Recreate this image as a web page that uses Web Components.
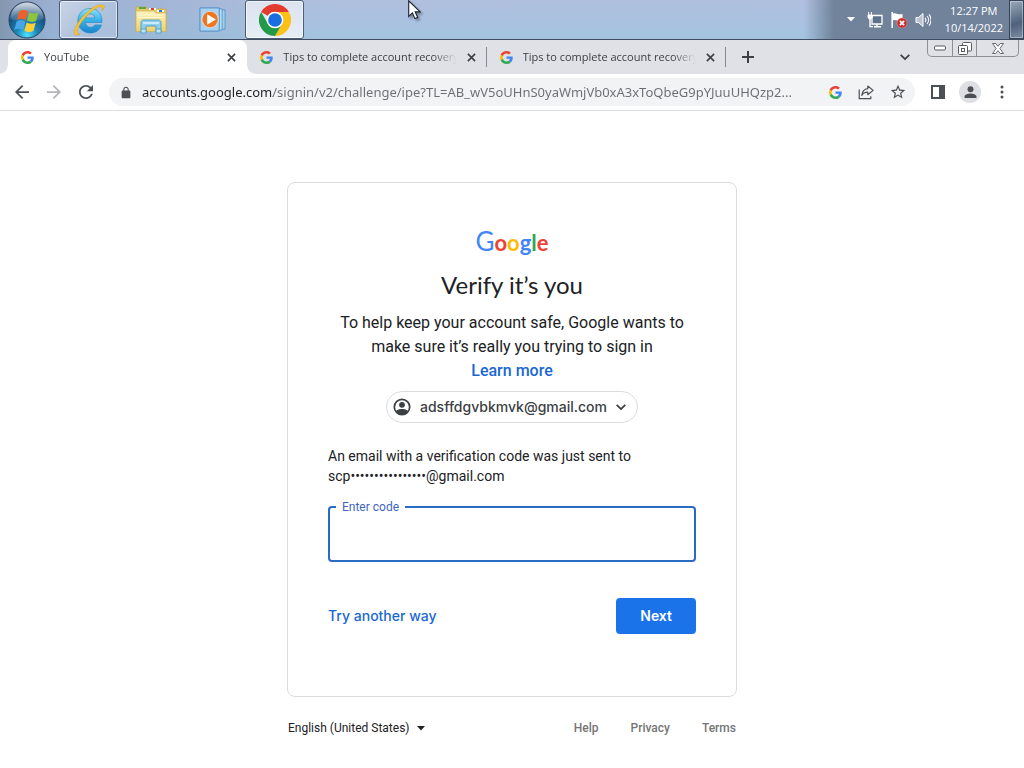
<!DOCTYPE html>
<html lang="en">
<head>
<meta charset="utf-8">
<title>YouTube</title>
<style>
  html, body { height: 100%; }
  body {
    margin: 0;
    background: #fff;
    font-family: Roboto, "Liberation Sans", sans-serif;
    color: #202124;
  }
</style>
</head>
<body>
<desktop-screen>
  <task-bar slot="taskbar">
    <task-button label="Internet Explorer" icon="ie" state="open"></task-button>
    <task-button label="Windows Explorer" icon="folder"></task-button>
    <task-button label="Windows Media Player" icon="player" size="27"></task-button>
    <task-button label="Google Chrome" icon="chrome" state="active"></task-button>
    <system-tray slot="tray"></system-tray>
  </task-bar>
  <tab-strip slot="tabs">
    <browser-tab active>YouTube</browser-tab>
    <browser-tab>Tips to complete account recovery</browser-tab>
    <browser-tab>Tips to complete account recovery</browser-tab>
  </tab-strip>
  <address-bar slot="toolbar"></address-bar>
  <sign-in-page>
    <sign-in-card>
      <account-chip slot="account">adsffdgvbkmvk@gmail.com</account-chip>
      <code-field slot="field" label="Enter code"></code-field>
    </sign-in-card>
    <page-footer></page-footer>
  </sign-in-page>
</desktop-screen>

<script>
const ICONS = {
  google: ['0 0 48 48', `
    <path fill="#ea4335" d="M24 9.5c3.54 0 6.71 1.22 9.21 3.6l6.85-6.85C35.9 2.38 30.47 0 24 0 14.62 0 6.51 5.38 2.56 13.22l7.98 6.19C12.43 13.72 17.74 9.5 24 9.5z"/>
    <path fill="#4285f4" d="M46.98 24.55c0-1.57-.15-3.09-.38-4.55H24v9.02h12.94c-.58 2.96-2.26 5.48-4.78 7.18l7.73 6c4.51-4.18 7.09-10.36 7.09-17.65z"/>
    <path fill="#fbbc05" d="M10.53 28.59c-.48-1.45-.76-2.99-.76-4.59s.27-3.14.76-4.59l-7.98-6.19C.92 16.46 0 20.12 0 24c0 3.88.92 7.54 2.56 10.78l7.97-6.19z"/>
    <path fill="#34a853" d="M24 48c6.48 0 11.93-2.13 15.89-5.81l-7.73-6c-2.15 1.45-4.92 2.3-8.16 2.3-6.26 0-11.57-4.22-13.47-9.91l-7.98 6.19C6.51 42.62 14.62 48 24 48z"/>`],
  close: ['0 0 10 10', `<path d="M1 1l8 8M9 1L1 9" stroke="currentColor" stroke-width="1.8" fill="none"/>`],
  plus: ['0 0 12 12', `<path d="M6 0v12M0 6h12" stroke="currentColor" stroke-width="2" fill="none"/>`],
  chevron: ['0 0 10 10', `<path d="M.7 2.8L5 7.1l4.3-4.3" stroke="currentColor" stroke-width="1.8" fill="none"/>`],
  back: ['4 4 16 16', `<path fill="currentColor" d="M20 11H7.83l5.59-5.59L12 4l-8 8 8 8 1.41-1.41L7.83 13H20v-2z"/>`],
  forward: ['4 4 16 16', `<path fill="currentColor" d="M12 4l-1.41 1.41L16.17 11H4v2h12.17l-5.58 5.59L12 20l8-8z"/>`],
  reload: ['4 4 16 16', `<path fill="currentColor" d="M17.65 6.35C16.2 4.9 14.21 4 12 4c-4.42 0-7.99 3.58-7.99 8s3.57 8 7.99 8c3.73 0 6.84-2.55 7.73-6h-2.08c-.82 2.33-3.04 4-5.65 4-3.31 0-6-2.69-6-6s2.69-6 6-6c1.66 0 3.14.69 4.22 1.78L13 11h7V4l-2.35 2.35z"/>`],
  lock: ['1 0 22 23', `<path fill="currentColor" d="M18 8h-1V6c0-2.76-2.24-5-5-5S7 3.24 7 6v2H6c-1.1 0-2 .9-2 2v10c0 1.1.9 2 2 2h12c1.1 0 2-.9 2-2V10c0-1.1-.9-2-2-2zM9 6a3 3 0 016 0v2H9z"/>`],
  share: ['0 0 16 16', `<path fill="none" stroke="currentColor" stroke-width="1.2" stroke-linejoin="round" d="M1.2 5.5v9.2h11.6v-2.4M9.8 2l5.3 4.4-5.3 4.3V8.2C6.7 8.2 4.9 9.3 3.8 11.4 4.2 7.7 6.2 5 9.8 4.6z"/>`],
  star: ['1 1 22 22', `<path fill="currentColor" d="M22 9.24l-7.19-.62L12 2 9.19 8.63 2 9.24l5.46 4.73L5.82 21 12 17.27 18.18 21l-1.63-7.03L22 9.24zM12 15.4l-3.76 2.27 1-4.28-3.32-2.88 4.38-.38L12 6.1l1.71 4.04 4.38.38-3.32 2.88 1 4.28L12 15.4z"/>`],
  panel: ['0 0 14 14', `<path fill="currentColor" fill-rule="evenodd" d="M0 0h14v14H0zM2 2v10h6V2z"/>`],
  person: ['0 0 14 14', `<circle cx="7" cy="3.6" r="3.2" fill="currentColor"/><path fill="currentColor" d="M.6 13v-1.6C.6 9.2 4.5 8.2 7 8.2s6.4 1 6.4 3.2V13z"/>`],
  dots: ['0 0 4 14', `<g fill="currentColor"><circle cx="2" cy="2" r="1.5"/><circle cx="2" cy="7" r="1.5"/><circle cx="2" cy="12" r="1.5"/></g>`],
  account: ['0 0 18 18', `
    <circle cx="9" cy="9" r="7.7" fill="none" stroke="currentColor" stroke-width="1.7"/>
    <circle cx="9" cy="6.8" r="2.9" fill="currentColor"/>
    <path fill="currentColor" d="M2.6 13.2C4.2 11.5 6.5 10.9 9 10.9s4.8.6 6.4 2.3C14 15.7 11.7 17 9 17s-5-1.3-6.4-3.8z"/>`],
  caret: ['0 0 8 5', `<path d="M0 0h8L4 4.5z" fill="currentColor"/>`],
  network: ['0 0 16 16', `
    <path d="M5 3.5h10v8.5H5z" fill="#5d718c" stroke="#fff" stroke-width="1.3"/>
    <path d="M7 14.7h7M10 12v2.5M3 6v8.6h3" stroke="#fff" stroke-width="1.4" fill="none"/>
    <path d="M1 3h4.200v2.500L4 7H2.200L1 5.500zM1.700 0v3M4.400 0v3" fill="#fff" stroke="#fff" stroke-width="1"/>`],
  flag: ['0 0 16 16', `
    <path d="M1.2 0v16" stroke="#fff" stroke-width="1.6"/>
    <path d="M2 1.5c3-1.3 4.5 1.6 9.5.4v6.6c-4.5 1.2-6.5-1.3-9.5-.2z" fill="#fff"/>
    <circle cx="11" cy="11" r="5" fill="#cf2b2b" stroke="#e9a09c" stroke-width=".5"/>
    <path d="M8.9 8.9l4.2 4.2m0-4.2l-4.2 4.2" stroke="#fff" stroke-width="1.7"/>`],
  speaker: ['0 0 16 16', `
    <path d="M1 5.5h2.500L8 1.500v13l-4.500-4H1z" fill="#b9c3cf" stroke="#fff" stroke-width="1"/>
    <path d="M10 5.8a3.4 3.4 0 010 4.4M12 4a6 6 0 010 8M14 2.3a9 9 0 010 11.4" stroke="#fff" stroke-width="1.1" fill="none"/>`],
  minimize: ['0 0 12 6', `<rect x=".6" y="1" width="10.8" height="4" rx="1" fill="#fff" stroke="#555b63"/>`],
  restore: ['0 0 14 13', `<g fill="#fff" stroke="#555b63"><rect x="4.5" y=".5" width="9" height="8.5" rx="1"/><rect x=".5" y="3.5" width="9" height="9" rx="1"/><rect x="3.5" y="6.5" width="3" height="3"/></g>`],
  quit: ['0 0 12 11', `<path d="M.5.5h3.3L6 3.3 8.2.5h3.3L7.9 5.5l3.6 5H8.2L6 7.7l-2.2 2.8H.5l3.6-5z" fill="#fff" stroke="#555b63" stroke-width=".9"/>`],
  cursor: ['0 0 13 20', `<path d="M.7.8v15.600l3.700-3.500 2.500 5.700 2.700-1.200-2.400-5.500h5z" fill="#fff" stroke="#18202c" stroke-width="1.1"/>`],
  orb: ['0 0 38 38', `
    <defs>
      <radialGradient id="base" cx=".5" cy=".92" r=".85"><stop offset="0" stop-color="#4fe0fb"/><stop offset=".35" stop-color="#1b86b9"/><stop offset=".75" stop-color="#174f7d"/><stop offset="1" stop-color="#5a7a98"/></radialGradient>
      <linearGradient id="gloss" x2="0" y2="1"><stop stop-color="#fff" stop-opacity=".7"/><stop offset="1" stop-color="#fff" stop-opacity=".08"/></linearGradient>
    </defs>
    <circle cx="19" cy="19" r="18" fill="url(#base)" stroke="#29445f"/>
    <path d="M2.5 18a16.5 16.5 0 0133 0c-9 3.5-24 3.5-33 0z" fill="url(#gloss)"/>
    <g transform="translate(-1.5 -1.5) scale(1.12)">
      <path d="M11.500 10.500c3-1.600 5.500-1.200 7.600.2l-2 7.600c-2.600-1.500-4.800-1.600-7.700-.1z" fill="#f0602a"/>
      <path d="M20.300 11.400c2.800 1.500 5.200 1.500 8.200.2l-2.100 7.600c-2.900 1.300-5.500 1-8.100-.4z" fill="#8cc63f"/>
      <path d="M9 19.600c3-1.400 5.300-1.300 7.800.2l-2 7.500c-2.500-1.400-4.900-1.500-7.800-.1z" fill="#48a7e8"/>
      <path d="M18 20.500c2.700 1.500 5.200 1.500 8.100.2L24 28.200c-2.800 1.300-5.300 1.200-8-.3z" fill="#ffd036"/>
    </g>`],
  ie: ['0 0 32 32', `
    <defs><linearGradient id="blue" x2="0" y2="1"><stop stop-color="#8fe0fb"/><stop offset=".5" stop-color="#35b0e8"/><stop offset="1" stop-color="#1b83cb"/></linearGradient></defs>
    <path fill="url(#blue)" stroke="#2287c4" stroke-width=".6" fill-rule="evenodd" d="M17 4.500c7.200 0 12 5.200 12 12v2H12.500c.5 3.200 2.400 4.700 5 4.700 2 0 3.400-.8 4.300-2.300h6.700C27 26 22.700 29 17.300 29 10 29 4.800 24 4.800 16.800S10 4.500 17 4.500zM12.700 14h9.200c-.4-2.700-2.100-4.100-4.600-4.100S13.200 11.300 12.700 14z"/>
    <path fill="#f7c631" stroke="#d99a1b" stroke-width=".5" d="M30.600 1.400c-2.400-1.700-8.300 0-14.200 4.800C8.400 12.700.2 24 1.500 29.600c.6 2.200 3.200 1.700 5.600.3-2 .2-2.900-.4-2.900-2 0-4.800 6.700-14.400 13.600-20C22.500 4.100 27 2 28.800 3.200c1 .7.8 2.200.2 3.800 1.800-2.400 2.800-4.700 1.600-5.600z"/>`],
  folder: ['0 0 32 32', `
    <defs><linearGradient id="manila" x2="0" y2="1"><stop stop-color="#fff3ba"/><stop offset="1" stop-color="#ecd06a"/></linearGradient></defs>
    <path d="M1 3h11l1 2h18v22H1z" fill="#e7cb69" stroke="#c4a44b" stroke-width=".7"/>
    <path d="M4 3h7v2H4z" fill="#5aa846"/><path d="M14 4h7v2h-7z" fill="#fff"/><path d="M16 4h3v2h-3z" fill="#d84331"/><path d="M22 6h7v2h-7z" fill="#fff"/><path d="M24 6h3v2h-3z" fill="#3579c4"/>
    <path d="M1 7h18l2 2h10v18.500H1z" fill="url(#manila)" stroke="#cfb25a" stroke-width=".7"/>
    <path d="M3 11h25M3 13.500h25" stroke="#fff8d5" stroke-width="1"/>
    <path d="M6 28v-9.500C6 17 7 16 8.500 16h15c1.500 0 2.500 1 2.500 2.500V28h-5v-6H11v6z" fill="#8fd0ef" stroke="#4c9ac6" stroke-width=".9"/>
    <path d="M8 19h16" stroke="#dff5fe" stroke-width="1.5"/>
    <path d="M6 25h5v4H6zM21 25h5v4h-5z" fill="#b8e5f7" stroke="#4c9ac6" stroke-width=".8"/>`],
  player: ['0 0 28 28', `
    <path d="M9 4h18v20H9z" fill="#a3cff0" stroke="#4a8ec2" stroke-width=".8"/>
    <path d="M5 3h19v22H5z" fill="#b8dbf5" stroke="#4a8ec2" stroke-width=".8"/>
    <path d="M1 2h20v24H1z" fill="#a9d3f2" stroke="#4287be" stroke-width=".9"/>
    <circle cx="11.5" cy="14" r="8.6" fill="#ef7620" stroke="#d8d6d8" stroke-width="1.2"/>
    <path d="M8.5 8.500v11l9-5.500z" fill="#fff"/>`],
  chrome: ['0 0 48 48', `
    <path fill="#e33b2e" d="M3.2 12A24 24 0 0144.8 12H24a12 12 0 00-10.4 6z"/>
    <path fill="#fbc116" d="M44.8 12A24 24 0 0124 48l10.4-18A12 12 0 0024 12z"/>
    <path fill="#229a48" d="M24 48A24 24 0 013.2 12l10.4 18A12 12 0 0034.4 30z"/>
    <circle cx="24" cy="24" r="12.5" fill="#fff"/><circle cx="24" cy="24" r="10.3" fill="#1a6fe0"/>`]
};

// name = key in ICONS, w / h = drawn size in pixels
class UiIcon extends HTMLElement {
  constructor() {
    super();
    this.attachShadow({ mode: 'open' });
  }

  connectedCallback() {
    const [viewBox, shapes] = ICONS[this.getAttribute('name')];
    const w = this.getAttribute('w') || 16;
    const h = this.getAttribute('h') || w;
    this.shadowRoot.innerHTML = `
      <style>
        :host { display: block; flex: none; line-height: 0; }
        svg { display: block; }
      </style>
      <svg width="${w}" height="${h}" viewBox="${viewBox}" aria-hidden="true">${shapes}</svg>
    `;
  }
}

class DesktopScreen extends HTMLElement {
  constructor() {
    super();
    this.attachShadow({ mode: 'open' }).innerHTML = `
      <style>
        :host {
          display: flex;
          flex-direction: column;
          min-height: 100vh;
        }
        header {
          font-family: "Open Sans", "Noto Sans", sans-serif;
        }
        main { flex: 1; }
        .cursor {
          position: absolute;
          left: 408px;
          top: 0;
          filter: drop-shadow(2px 2px 1px rgba(0,0,0,0.35));
        }
      </style>
      <header>
        <slot name="taskbar"></slot>
        <slot name="tabs"></slot>
        <slot name="toolbar"></slot>
      </header>
      <main><slot></slot></main>
      <ui-icon class="cursor" name="cursor" w="13" h="20"></ui-icon>
    `;
  }
}

class TaskBar extends HTMLElement {
  constructor() {
    super();
    this.attachShadow({ mode: 'open' }).innerHTML = `
      <style>
        :host {
          display: flex;
          height: 39px;
          border-bottom: 1px solid #3d4c61;
          background:
            linear-gradient(to right, rgba(105,122,145,0.6), rgba(120,145,185,0.35) 50px, rgba(160,180,210,0) 330px),
            linear-gradient(to right, rgba(112,131,155,0) calc(100% - 220px), #70839b calc(100% - 190px)),
            linear-gradient(#b0bfde, #a4c4e0);
        }
        .start {
          width: 55px;
          padding: 0 0 0 8px;
          margin-right: 4px;
          border: 0;
          background: none;
        }
        nav { display: flex; gap: 3px; flex: 1; }
      </style>
      <button class="start" aria-label="Start"><ui-icon name="orb" w="38"></ui-icon></button>
      <nav><slot></slot></nav>
      <slot name="tray"></slot>
    `;
  }
}

class TaskButton extends HTMLElement {
  constructor() {
    super();
    this.attachShadow({ mode: 'open' });
  }

  connectedCallback() {
    this.shadowRoot.innerHTML = `
      <style>
        :host { display: block; }
        button {
          box-sizing: border-box;
          width: 59px;
          height: 39px;
          padding: 0;
          display: grid;
          place-items: center;
          border: 1px solid transparent;
          border-radius: 3px;
          background: none;
        }
        :host([state]) button {
          border-color: #4b5d76;
          box-shadow: inset 0 0 0 1px rgba(255,255,255,0.6);
          background: linear-gradient(135deg, #c9d5e6, #b1c3dc 50%, #a8bedb);
        }
        :host([state="active"]) button {
          background: linear-gradient(#dce3ef, #e6edf5);
        }
      </style>
      <button aria-label="${this.getAttribute('label')}">
        <ui-icon name="${this.getAttribute('icon')}" w="${this.getAttribute('size') || 32}"></ui-icon>
      </button>
    `;
  }
}

class SystemTray extends HTMLElement {
  constructor() {
    super();
    this.attachShadow({ mode: 'open' }).innerHTML = `
      <style>
        :host { display: flex; align-items: center; color: #fff; }
        button { padding: 0; border: 0; background: none; color: inherit; }
        .icons { display: flex; align-items: center; gap: 8px; }
        .icons button:first-child { margin-right: 4px; }
        time {
          margin: 0 6px 0 14px;
          padding-bottom: 2px;
          text-align: center;
          font-size: 11px;
          line-height: 17px;
        }
        .peek {
          box-sizing: border-box;
          align-self: stretch;
          width: 15px;
          border: 1px solid #33445b;
          box-shadow: inset 0 0 0 1px rgba(255,255,255,0.35);
          background: linear-gradient(160deg, #9aa9bb, #4f627a 60%, #7d8fa5);
        }
      </style>
      <div class="icons">
        <button aria-label="Show hidden icons"><ui-icon name="caret" w="8" h="5"></ui-icon></button>
        <button aria-label="Network"><ui-icon name="network" w="16"></ui-icon></button>
        <button aria-label="Action Center"><ui-icon name="flag" w="16"></ui-icon></button>
        <button aria-label="Volume"><ui-icon name="speaker" w="16"></ui-icon></button>
      </div>
      <time datetime="2022-10-14T12:27">12:27 PM<br>10/14/2022</time>
      <button class="peek" aria-label="Show desktop"></button>
    `;
  }
}

class TabStrip extends HTMLElement {
  constructor() {
    super();
    this.attachShadow({ mode: 'open' }).innerHTML = `
      <style>
        :host {
          display: flex;
          align-items: center;
          height: 34px;
          padding: 0 5px 0 8px;
          background: #dfe1e6;
          color: #3c4043;
        }
        button { padding: 0; border: 0; background: none; color: inherit; }
        .tabs { display: flex; align-self: stretch; flex: 0 1 718px; min-width: 0; }
        .new { margin-left: 16px; }
        .search { margin: 0 17px 0 auto; }
        .window {
          display: flex;
          align-self: flex-start;
          border: 1px solid #8b9098;
          border-top: 0;
          border-radius: 0 0 5px 5px;
        }
        .window button {
          width: 24px;
          height: 16px;
          display: grid;
          place-items: center;
        }
        .window button + button { border-left: 1px solid #8b9098; }
        .window .quit { width: 42px; }
      </style>
      <div class="tabs" role="tablist"><slot></slot></div>
      <button class="new" aria-label="New tab"><ui-icon name="plus" w="12"></ui-icon></button>
      <button class="search" aria-label="Search tabs"><ui-icon name="chevron" w="10"></ui-icon></button>
      <div class="window">
        <button aria-label="Minimize"><ui-icon name="minimize" w="12" h="6"></ui-icon></button>
        <button aria-label="Restore"><ui-icon name="restore" w="14" h="13"></ui-icon></button>
        <button class="quit" aria-label="Close window"><ui-icon name="quit" w="12" h="11"></ui-icon></button>
      </div>
    `;
  }
}

class BrowserTab extends HTMLElement {
  constructor() {
    super();
    this.attachShadow({ mode: 'open' }).innerHTML = `
      <style>
        :host {
          box-sizing: border-box;
          display: flex;
          align-items: center;
          gap: 10px;
          flex: 1 1 0;
          min-width: 0;
          padding: 0 11px 0 13px;
          position: relative;
        }
        :host([active]) {
          border-radius: 8px 8px 0 0;
          background: #fff;
        }
        /* feet of the active tab */
        :host([active])::before, :host([active])::after {
          content: "";
          position: absolute;
          bottom: 0;
          width: 8px;
          height: 8px;
        }
        :host([active])::before {
          left: -8px;
          background: radial-gradient(circle at 0 0, transparent 7px, #fff 8px);
        }
        :host([active])::after {
          right: -8px;
          background: radial-gradient(circle at 100% 0, transparent 7px, #fff 8px);
        }
        :host(:not([active]))::after {
          content: "";
          position: absolute;
          right: 0;
          top: 7px;
          height: 20px;
          border-right: 1px solid #85898f;
        }
        .title {
          flex: 1;
          min-width: 0;
          overflow: hidden;
          white-space: nowrap;
          font-size: 11px;
          line-height: 16px;
          -webkit-mask: linear-gradient(to left, transparent, #000 24px);
          mask: linear-gradient(to left, transparent, #000 24px);
        }
        button { padding: 0; border: 0; background: none; color: inherit; }
      </style>
      <ui-icon name="google" w="13"></ui-icon>
      <span class="title" role="tab"><slot></slot></span>
      <button aria-label="Close tab"><ui-icon name="close" w="9"></ui-icon></button>
    `;
  }
}

class AddressBar extends HTMLElement {
  constructor() {
    super();
    this.attachShadow({ mode: 'open' }).innerHTML = `
      <style>
        :host {
          display: flex;
          align-items: center;
          height: 36px;
          padding: 0 15px;
          border-bottom: 1px solid #dcdee1;
          background: #fff;
          color: #4c4f54;
        }
        button { padding: 0; border: 0; background: none; color: inherit; }
        .nav { display: flex; gap: 18px; margin-right: 16px; }
        .nav button:disabled { color: #b4b6ba; }
        .box {
          display: flex;
          align-items: center;
          flex: 1;
          min-width: 0;
          height: 28px;
          padding: 0 9px 0 11px;
          border-radius: 14px;
          background: #f1f3f4;
        }
        input {
          flex: 1;
          min-width: 0;
          margin: 0 15px 0 10px;
          padding: 0;
          border: 0;
          outline: 0;
          font: 13px/20px "Noto Sans", "Open Sans", sans-serif;
          text-overflow: ellipsis;
          /* host part dark, path part grey */
          background: linear-gradient(to right, #202124 131px, #6a6e73 131px);
          -webkit-background-clip: text;
          background-clip: text;
          color: transparent;
        }
        .actions { display: flex; align-items: center; gap: 16px; }
        .tools { display: flex; align-items: center; gap: 14px; margin-left: 16px; }
        .avatar {
          width: 22px;
          height: 22px;
          display: grid;
          place-items: center;
          border-radius: 50%;
          background: #dddfe5;
        }
        .menu { width: 14px; display: grid; place-items: center; }
      </style>
      <div class="nav">
        <button aria-label="Back"><ui-icon name="back" w="14"></ui-icon></button>
        <button aria-label="Forward" disabled><ui-icon name="forward" w="14"></ui-icon></button>
        <button aria-label="Reload"><ui-icon name="reload" w="14"></ui-icon></button>
      </div>
      <div class="box">
        <ui-icon name="lock" w="12" h="13"></ui-icon>
        <input type="text" aria-label="Address and search bar" value="accounts.google.com/signin/v2/challenge/ipe?TL=AB_wV5oUHnS0yaWmjVb0xA3xToQbeG9pYJuuUHQzp2...">
        <div class="actions">
          <button aria-label="Google Lens"><ui-icon name="google" w="13"></ui-icon></button>
          <button aria-label="Share this page"><ui-icon name="share" w="16"></ui-icon></button>
          <button aria-label="Bookmark this tab"><ui-icon name="star" w="16"></ui-icon></button>
        </div>
      </div>
      <div class="tools">
        <button aria-label="Side panel"><ui-icon name="panel" w="14"></ui-icon></button>
        <button class="avatar" aria-label="Profile"><ui-icon name="person" w="13"></ui-icon></button>
        <button class="menu" aria-label="Menu"><ui-icon name="dots" w="4" h="14"></ui-icon></button>
      </div>
    `;
  }
}

class SignInPage extends HTMLElement {
  constructor() {
    super();
    this.attachShadow({ mode: 'open' }).innerHTML = `
      <style>
        :host {
          box-sizing: border-box;
          display: block;
          max-width: 450px;
          margin: 0 auto;
          padding-top: 71px;
        }
      </style>
      <slot></slot>
    `;
  }
}

class SignInCard extends HTMLElement {
  constructor() {
    super();
    this.attachShadow({ mode: 'open' }).innerHTML = `
      <style>
        :host {
          display: block;
          padding: 40px 40px 62px;
          border: 1px solid #dadce0;
          border-radius: 8px;
        }
        .intro { text-align: center; }
        .logo {
          height: 36px;
          font: 700 22px/36px Lato, sans-serif;
        }
        .cap { font-size: 26px; font-weight: 400; }
        .b { color: #4285f4; }
        .r { color: #ea4335; }
        .y { color: #fbbc05; }
        .g { color: #34a853; }
        h1 {
          margin: 10px 0;
          font: 400 24px/32px Lato, sans-serif;
        }
        p { margin: 0; }
        .lead { font-size: 16px; line-height: 24px; }
        a { color: #1a67d2; font-weight: 500; text-decoration: none; }
        .sent {
          margin: 23px 0 20px;
          font-size: 14px;
          line-height: 20px;
        }
        .actions {
          display: flex;
          justify-content: space-between;
          align-items: center;
          margin-top: 36px;
          font: 500 14px/20px Inter, sans-serif;
        }
        button {
          height: 36px;
          padding: 0 24px;
          border: 0;
          border-radius: 4px;
          font: inherit;
          font-weight: 600;
          color: #fff;
          background: #1a73e8;
        }
      </style>
      <div class="intro">
        <div class="logo"><span class="b cap">G</span><span class="r">o</span><span class="y">o</span><span class="b">g</span><span class="g">l</span><span class="r">e</span></div>
        <h1>Verify it’s you</h1>
        <p class="lead">To help keep your account safe, Google wants to make sure it’s really you trying to sign in<br><a href="#">Learn more</a></p>
        <slot name="account"></slot>
      </div>
      <p class="sent">An email with a verification code was just sent to scp••••••••••••••••@gmail.com</p>
      <slot name="field"></slot>
      <div class="actions">
        <a href="#">Try another way</a>
        <button type="button">Next</button>
      </div>
    `;
  }
}

class AccountChip extends HTMLElement {
  constructor() {
    super();
    this.attachShadow({ mode: 'open' }).innerHTML = `
      <style>
        :host { display: flex; justify-content: center; margin-top: 8px; }
        button {
          display: flex;
          align-items: center;
          gap: 9px;
          height: 32px;
          padding: 0 11px 0 6px;
          border: 1px solid #dadce0;
          border-radius: 16px;
          background: #fff;
          color: #3c4043;
          font: 500 14px/20px Inter, sans-serif;
        }
      </style>
      <button type="button">
        <ui-icon name="account" w="18"></ui-icon>
        <slot></slot>
        <ui-icon name="chevron" w="10"></ui-icon>
      </button>
    `;
  }
}

class CodeField extends HTMLElement {
  constructor() {
    super();
    this.attachShadow({ mode: 'open' });
  }

  connectedCallback() {
    this.shadowRoot.innerHTML = `
      <style>
        :host { display: block; position: relative; }
        input {
          box-sizing: border-box;
          display: block;
          width: 100%;
          height: 56px;
          padding: 13px 15px;
          border: 2px solid #2a6bc4;
          border-radius: 4px;
          outline: 0;
          font: 16px/24px Roboto, sans-serif;
        }
        label {
          position: absolute;
          left: 8px;
          top: -7px;
          padding: 0 6px;
          background: #fff;
          color: #3f66bd;
          font-size: 12px;
          line-height: 16px;
        }
      </style>
      <input id="code" type="tel" autocomplete="off">
      <label for="code">${this.getAttribute('label')}</label>
    `;
  }
}

class PageFooter extends HTMLElement {
  constructor() {
    super();
    this.attachShadow({ mode: 'open' }).innerHTML = `
      <style>
        :host {
          display: flex;
          justify-content: space-between;
          align-items: center;
          padding: 23px 1px 0;
          font-size: 12px;
          line-height: 16px;
        }
        .language { display: flex; align-items: center; gap: 7px; }
        select {
          appearance: none;
          padding: 0;
          border: 0;
          background: none;
          font: inherit;
          color: inherit;
        }
        nav { display: flex; gap: 32px; }
        a { color: #757575; font-weight: 500; text-decoration: none; }
      </style>
      <div class="language">
        <select aria-label="Language"><option>English (United States)</option></select>
        <ui-icon name="caret" w="8" h="5"></ui-icon>
      </div>
      <nav>
        <a href="#">Help</a>
        <a href="#">Privacy</a>
        <a href="#">Terms</a>
      </nav>
    `;
  }
}

customElements.define('ui-icon', UiIcon);
customElements.define('desktop-screen', DesktopScreen);
customElements.define('task-bar', TaskBar);
customElements.define('task-button', TaskButton);
customElements.define('system-tray', SystemTray);
customElements.define('tab-strip', TabStrip);
customElements.define('browser-tab', BrowserTab);
customElements.define('address-bar', AddressBar);
customElements.define('sign-in-page', SignInPage);
customElements.define('sign-in-card', SignInCard);
customElements.define('account-chip', AccountChip);
customElements.define('code-field', CodeField);
customElements.define('page-footer', PageFooter);
</script>
</body>
</html>
